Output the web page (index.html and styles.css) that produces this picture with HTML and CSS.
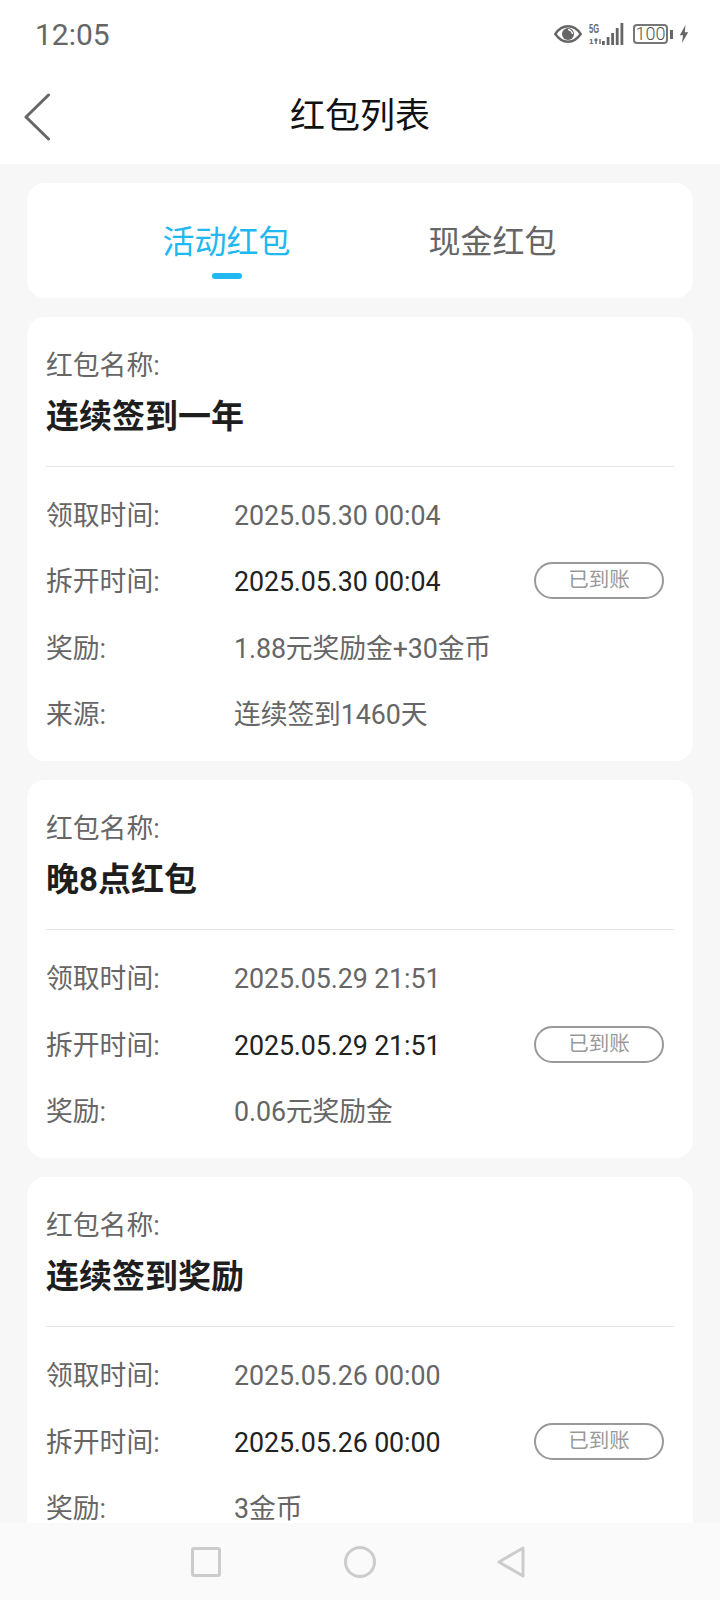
FILE: index.html
```html
<!DOCTYPE html>
<html lang="zh-CN">
<head>
  <meta charset="UTF-8" />
  <meta name="viewport" content="width=device-width, initial-scale=1.0" />
  <title>红包列表</title>
  <link rel="stylesheet" href="styles.css">
</head>
<body>
  <div class="phone">
    <div class="status-bar">
      <span class="clock">12:05</span>
      <div class="status-icons">
        <svg class="eye" width="28" height="18" viewBox="0 0 28 18">
          <path d="M1.300 9C5 3.500 9 1.300 14 1.300S23 3.500 26.700 9C23 14.500 19 16.700 14 16.700S5 14.500 1.300 9Z" fill="none" stroke="#666" stroke-width="2.400"/>
          <circle cx="14" cy="9" r="6" fill="#666"/>
          <path d="M14 4.500A4.500 4.500 0 0 1 18.500 9 6 6 0 0 0 14 4.500Z" fill="#fff" stroke="#fff"/>
        </svg>
        <svg class="signal" width="35" height="22" viewBox="0 0 35 22">
          <text x="0" y="10" class="signal-text" textLength="10" lengthAdjust="spacingAndGlyphs">5G</text>
          <text x="0" y="21" class="signal-text small">1</text>
          <path d="M7 16V21M5.500 17.500 7 16 8.500 17.500M11 16V21" fill="none" stroke="#666" stroke-width="1.400"/>
          <rect x="13" y="18" width="2.800" height="4" fill="#666"/>
          <rect x="17.700" y="14" width="2.800" height="8" fill="#666"/>
          <rect x="22.200" y="10" width="2.800" height="12" fill="#666"/>
          <rect x="26.800" y="5" width="2.800" height="17" fill="#666"/>
          <rect x="31.500" y="0" width="2.800" height="22" fill="#666"/>
        </svg>
        <div class="battery">
          <span class="battery-level">100</span>
          <span class="battery-cap"></span>
        </div>
        <svg class="bolt" width="10" height="18" viewBox="0 0 10 18">
          <path d="M6.500 0 .8 10.300H4L3 18 9.200 7.200H5.800Z" fill="#666"/>
        </svg>
      </div>
    </div>

    <div class="title-bar">
      <svg class="back" width="28" height="48" viewBox="0 0 28 48">
        <path d="M25.500 2 3 24 25.500 46" fill="none" stroke="#666" stroke-width="3" stroke-linecap="round" stroke-linejoin="round"/>
      </svg>
      <h1>红包列表</h1>
    </div>

    <div class="content">
      <div class="tabs">
        <div class="tab active">活动红包</div>
        <div class="tab">现金红包</div>
      </div>

      <div class="card">
        <div class="name-label">红包名称:</div>
        <div class="name">连续签到一年</div>
        <div class="rows">
          <div class="row"><span class="key">领取时间:</span><span class="val">2025.05.30 00:04</span></div>
          <div class="row"><span class="key">拆开时间:</span><span class="val dark">2025.05.30 00:04</span><span class="badge">已到账</span></div>
          <div class="row"><span class="key">奖励:</span><span class="val">1.88元奖励金+30金币</span></div>
          <div class="row"><span class="key">来源:</span><span class="val">连续签到1460天</span></div>
        </div>
      </div>

      <div class="card">
        <div class="name-label">红包名称:</div>
        <div class="name">晚8点红包</div>
        <div class="rows">
          <div class="row"><span class="key">领取时间:</span><span class="val">2025.05.29 21:51</span></div>
          <div class="row"><span class="key">拆开时间:</span><span class="val dark">2025.05.29 21:51</span><span class="badge">已到账</span></div>
          <div class="row"><span class="key">奖励:</span><span class="val">0.06元奖励金</span></div>
        </div>
      </div>

      <div class="card">
        <div class="name-label">红包名称:</div>
        <div class="name">连续签到奖励</div>
        <div class="rows">
          <div class="row"><span class="key">领取时间:</span><span class="val">2025.05.26 00:00</span></div>
          <div class="row"><span class="key">拆开时间:</span><span class="val dark">2025.05.26 00:00</span><span class="badge">已到账</span></div>
          <div class="row"><span class="key">奖励:</span><span class="val">3金币</span></div>
        </div>
      </div>
    </div>

    <div class="nav-bar">
      <svg class="nav-square" width="30" height="32" viewBox="0 0 30 32"><rect x="1.500" y="2.500" width="27" height="27" rx="1.500" fill="none" stroke="#ccc" stroke-width="3"/></svg>
      <svg width="32" height="32" viewBox="0 0 32 32"><circle cx="16" cy="16" r="14.500" fill="none" stroke="#ccc" stroke-width="3"/></svg>
      <svg width="28" height="32" viewBox="0 0 28 32"><path d="M26 2V30L2 16Z" fill="none" stroke="#ccc" stroke-width="3" stroke-linejoin="round"/></svg>
    </div>
  </div>
</body>
</html>
```

FILE: styles.css
```css
* {
  box-sizing: border-box;
}

html,
body {
  margin: 0;
  height: 1600px;
}

body {
  font-family: Roboto, "Noto Sans CJK SC", sans-serif;
  color: #666;
  background: #f7f7f7;
}

.phone {
  width: 720px;
  height: 1600px;
  display: flex;
  flex-direction: column;
  overflow: hidden;
}

/* status bar */
.status-bar {
  height: 68px;
  background: #fff;
  display: flex;
  align-items: center;
  justify-content: space-between;
  padding: 0 31px 0 35px;
}

.clock {
  font-size: 30px;
  color: #666;
}

.status-icons {
  display: flex;
  align-items: center;
}

.eye {
  margin-right: 7px;
}

.signal {
  margin-right: 9px;
}

.signal-text {
  font-family: "Liberation Sans", sans-serif;
  font-size: 12px;
  font-weight: bold;
  fill: #666;
}

.signal-text.small {
  font-size: 8px;
}

.battery {
  display: flex;
  align-items: center;
  margin-right: 6px;
}

.battery-level {
  width: 35px;
  height: 20px;
  border: 2px solid #777;
  border-radius: 4px;
  font-size: 18px;
  font-weight: 300;
  line-height: 16px;
  text-align: center;
  color: #555;
}

.battery-cap {
  width: 3px;
  height: 9px;
  margin-left: 2px;
  background: #666;
}

/* title bar */
.title-bar {
  height: 96px;
  background: #fff;
  position: relative;
  display: flex;
  align-items: center;
  justify-content: center;
  padding-bottom: 8px;
}

.title-bar h1 {
  margin: 0;
  font-size: 35px;
  font-weight: 400;
  color: #111;
}

.back {
  position: absolute;
  left: 23px;
  top: 25px;
}

/* list */
.content {
  flex: 1;
  overflow: hidden;
  padding: 19px 27px 0;
  display: flex;
  flex-direction: column;
  gap: 19px;
}

.tabs {
  flex: none;
  height: 115px;
  background: #fff;
  border-radius: 18px;
  display: flex;
  justify-content: center;
  gap: 138px;
  padding: 36px 1px 0 0;
}

.tab {
  position: relative;
  height: 46px;
  font-size: 32px;
  line-height: 46px;
  color: #666;
}

.tab.active {
  color: #1fb8f0;
}

.tab.active::after {
  content: "";
  position: absolute;
  left: 50%;
  top: 54px;
  width: 30px;
  height: 6px;
  margin-left: -14px;
  border-radius: 3px;
  background: #1fb8f0;
}

.card {
  flex: none;
  background: #fff;
  border-radius: 18px;
  padding: 33px 19px 13px;
}

.name-label {
  font-size: 26.800px;
  line-height: 32px;
  color: #666;
}

.name {
  margin-top: 15px;
  font-size: 33px;
  line-height: 40px;
  font-weight: 700;
  color: #1e1e1e;
}

.rows {
  margin-top: 29px;
  padding-top: 16px;
  border-top: 1px solid #e6e6e6;
}

.row {
  height: 66.300px;
  display: flex;
  align-items: center;
  font-size: 26.800px;
  line-height: 32px;
}

.key {
  width: 188px;
  color: #666;
}

.val {
  flex: 1;
  letter-spacing: -0.100px;
  color: #666;
}

.val.dark {
  color: #222;
}

.badge {
  width: 130px;
  height: 37px;
  margin: 0 10px 3px 0;
  border: 2px solid #999;
  border-radius: 19px;
  font-size: 20.500px;
  line-height: 33px;
  text-align: center;
  color: #999;
}

/* bottom navigation */
.nav-bar {
  flex: none;
  height: 77px;
  background: #fafafa;
  display: flex;
  justify-content: center;
  align-items: center;
  gap: 121px;
  padding-right: 5px;
}

.nav-square {
  margin-right: 2px;
}
```
